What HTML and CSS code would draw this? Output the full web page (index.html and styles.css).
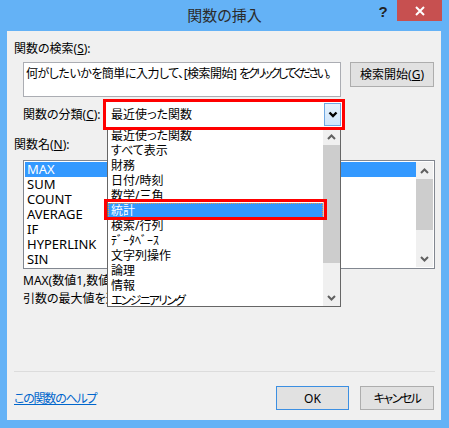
FILE: index.html
```html
<!DOCTYPE html>
<html lang="ja">
<head>
<meta charset="utf-8">
<title>関数の挿入</title>
<link rel="stylesheet" href="styles.css">
</head>
<body>
<div class="window">
  <div class="titlebar">
    <div class="tb-spacer"></div>
    <div class="title">関数の挿入</div>
    <div class="help">?</div>
    <div class="close">
      <svg width="10" height="10" viewBox="0 0 10 10"><path d="M1 1 L9 9 M9 1 L1 9" stroke="#fff" stroke-width="2" fill="none"/></svg>
    </div>
  </div>
  <div class="client">
    <div class="lbl">関数の検索(<u>S</u>):</div>
    <div class="search-row">
      <div class="search-box">何がしたいかを簡単に入力して、[検索開始] <span class="k-tight">をクリックしてください。</span></div>
      <div class="btn btn-go">検索開始(<u>G</u>)</div>
    </div>
    <div class="cat-row">
      <div class="cat-label">関数の分類(<u>C</u>):</div>
      <div class="hl-select">
        <div class="select">
          <span class="select-text">最近使った関数</span>
          <div class="drop-btn">
            <svg width="10" height="7" viewBox="0 0 10 7"><path d="M1.5 1.5 L5 5 L8.5 1.5" stroke="#000" stroke-width="2.4" fill="none"/></svg>
          </div>
        </div>
      </div>
    </div>
    <div class="lbl lbl-name">関数名(<u>N</u>):</div>
    <div class="listbox">
      <div class="items">
        <div class="item sel">MAX</div>
        <div class="item">SUM</div>
        <div class="item">COUNT</div>
        <div class="item">AVERAGE</div>
        <div class="item">IF</div>
        <div class="item">HYPERLINK</div>
        <div class="item">SIN</div>
      </div>
      <div class="vscroll">
        <div class="arrow"><svg width="9" height="6" viewBox="0 0 9 6"><path d="M1 5 L4.5 1.5 L8 5" stroke="#606060" stroke-width="2" fill="none"/></svg></div>
        <div class="thumb thumb-list"></div>
        <div class="track"></div>
        <div class="arrow"><svg width="9" height="6" viewBox="0 0 9 6"><path d="M1 1 L4.5 4.5 L8 1" stroke="#606060" stroke-width="2" fill="none"/></svg></div>
      </div>
    </div>
    <div class="desc desc1">MAX(数値1,数値2,...)</div>
    <div class="desc desc2">引数の最大値を返します。</div>
    <div class="sep"></div>
    <div class="footer">
      <a class="help-link" href="#">この関数のヘルプ</a>
      <div class="btn btn-ok">OK</div>
      <div class="btn btn-cancel"><span class="k-cancel">キャンセル</span></div>
    </div>

    <div class="dropdown">
      <div class="dd-items">
        <div class="dd-item">最近使った関数</div>
        <div class="dd-item">すべて表示</div>
        <div class="dd-item">財務</div>
        <div class="dd-item">日付/時刻</div>
        <div class="dd-item">数学/三角</div>
        <div class="dd-item dd-sel">統計</div>
        <div class="dd-item">検索/行列</div>
        <div class="dd-item">ﾃﾞｰﾀﾍﾞｰｽ</div>
        <div class="dd-item">文字列操作</div>
        <div class="dd-item">論理</div>
        <div class="dd-item">情報</div>
        <div class="dd-item"><span class="k-eng">エンジニアリング</span></div>
      </div>
      <div class="vscroll">
        <div class="arrow"><svg width="9" height="6" viewBox="0 0 9 6"><path d="M1 5 L4.5 1.5 L8 5" stroke="#606060" stroke-width="2" fill="none"/></svg></div>
        <div class="thumb thumb-dd"></div>
        <div class="track"></div>
        <div class="arrow"><svg width="9" height="6" viewBox="0 0 9 6"><path d="M1 1 L4.5 4.5 L8 1" stroke="#606060" stroke-width="2" fill="none"/></svg></div>
      </div>
    </div>
    <div class="hl-item"></div>
  </div>
</div>
</body>
</html>
```
FILE: styles.css
```css
* { box-sizing: border-box; margin: 0; padding: 0; }
html, body { width: 449px; height: 428px; overflow: hidden; }
body {
  font-family: "Noto Sans", "Noto Sans CJK JP", sans-serif;
  font-size: 12px;
  line-height: 15px;
  color: #000;
  font-feature-settings: "palt";
}
u { text-decoration: underline; text-underline-offset: 1px; }

.k-tight { letter-spacing: -2.6px; }
.k-eng { letter-spacing: -1.8px; }
.k-cancel { letter-spacing: -1.5px; }

.window {
  width: 449px;
  height: 428px;
  background: #64b2f6;
  display: flex;
  flex-direction: column;
}
.titlebar {
  height: 31px;
  flex: none;
  display: flex;
  align-items: flex-start;
}
.tb-spacer { width: 76px; flex: none; }
.title {
  flex: 1;
  text-align: center;
  font-family: "Noto Sans CJK JP", sans-serif;
  font-size: 15px;
  line-height: 30px;
  color: #2b2b2b;
}
.help {
  width: 20px;
  height: 24px;
  margin-right: 4px;
  font-family: "Liberation Sans", sans-serif;
  font-weight: bold;
  font-size: 15px;
  line-height: 24px;
  text-align: center;
  color: #222;
}
.close {
  width: 45px;
  height: 21px;
  margin-right: 7px;
  background: #c75050;
  display: flex;
  align-items: center;
  justify-content: center;
}

.client {
  position: relative;
  margin: 0 8px 8px 7px;
  height: 389px;
  background: #f0f0f0;
  padding: 10px 6px 0 7px;
}
.lbl { height: 15px; white-space: nowrap; }

.search-row {
  margin-top: 6px;
  margin-left: 9px;
  display: flex;
  align-items: flex-start;
}
.search-box {
  width: 318px;
  height: 35px;
  background: #fff;
  border: 1px solid #abadb3;
  padding: 3px 2px;
  white-space: nowrap;
  overflow: hidden;
  letter-spacing: -0.5px;
}
.btn {
  background: #e1e1e1;
  border: 1px solid #adadad;
  display: flex;
  align-items: center;
  justify-content: center;
  white-space: nowrap;
}
.btn-go { width: 84px; height: 25px; margin-left: 9px; }

.cat-row {
  margin-top: 2px;
  margin-left: 9px;
  display: flex;
  align-items: center;
}
.cat-label { width: 80px; white-space: nowrap; }
.hl-select {
  position: relative;
  z-index: 3;
  width: 242px;
  height: 31px;
  border: 3px solid #f00;
}
.select {
  width: 236px;
  height: 25px;
  background: #fff;
  display: flex;
  align-items: center;
  padding-left: 5px;
}
.select-text { flex: 1; }
.drop-btn {
  width: 17px;
  height: 23px;
  margin-right: 1px;
  background: linear-gradient(#e4f1fd, #cfe5fb);
  border: 1px solid #6fa8e3;
  display: flex;
  align-items: center;
  justify-content: center;
}

.lbl-name { margin-top: 7px; }
.listbox {
  margin-top: 8px;
  margin-left: 9px;
  width: 412px;
  height: 109px;
  border: 1px solid #828790;
  background: #fff;
  padding: 1px;
  display: flex;
}
.items { flex: 1; overflow: hidden; }
.item { height: 15px; line-height: 15px; padding-left: 2px; white-space: nowrap; font-size: 13px; }
.item.sel { background: #3399ff; color: #fff; }

.vscroll {
  width: 17px;
  flex: none;
  background: #f0f0f0;
  display: flex;
  flex-direction: column;
}
.arrow {
  height: 17px;
  flex: none;
  display: flex;
  align-items: center;
  justify-content: center;
}
.thumb { background: #cdcdcd; flex: none; }
.thumb-list { height: 51px; }
.thumb-dd { height: 118px; }
.track { flex: 1; }

.desc { margin-left: 9px; height: 15px; white-space: nowrap; }
.desc1 { margin-top: 4px; }
.desc2 { margin-top: 3px; }

.sep { margin-top: 65px; height: 1px; background: #dcdcdc; }

.footer {
  margin-top: 14px;
  margin-right: 1px;
  height: 24px;
  display: flex;
  align-items: center;
}
.help-link { color: #0066cc; text-decoration: underline; margin-top: 1px; letter-spacing: -1.2px; }
.btn-ok { margin-left: auto; width: 73px; height: 24px; border-color: #3c8fe2; }
.btn-cancel { margin-left: 11px; width: 74px; height: 24px; }

.dropdown {
  position: absolute;
  left: 100px;
  top: 96px;
  z-index: 2;
  width: 234px;
  height: 180px;
  background: #fff;
  border: 1px solid #666;
  display: flex;
}
.dd-items { flex: 1; overflow: hidden; }
.dd-item { height: 15px; padding-left: 3px; white-space: nowrap; }
.dd-sel {
  background: #3399ff;
  color: #fff;
  outline: 1px dotted #e89a4a;
  outline-offset: -1px;
}
.hl-item {
  position: absolute;
  z-index: 4;
  left: 97px;
  top: 168px;
  width: 223px;
  height: 21px;
  border: 3px solid #f00;
}
```
